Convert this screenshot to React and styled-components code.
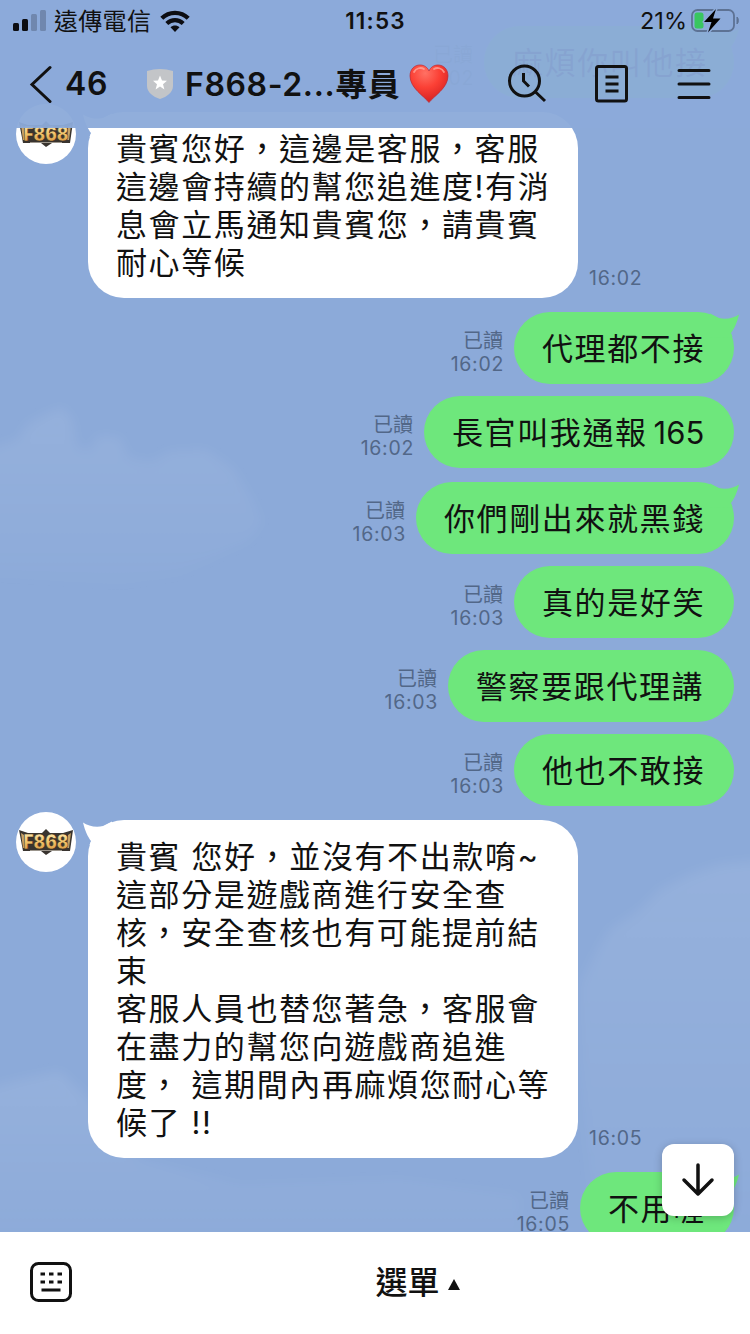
import React from "react";
import styled, { createGlobalStyle } from "styled-components";

const Global = createGlobalStyle`
  * { box-sizing: border-box; }
  body { margin: 0; background: #8caad9; }
`;

const FONT = `Inter, "Noto Sans CJK TC", sans-serif`;

const Screen = styled.div`
  position: relative;
  width: 750px;
  height: 1334px;
  overflow: hidden;
  display: flex;
  flex-direction: column;
  background: #8caad9;
  font-family: ${FONT};
  color: #111;
`;

const Sky = styled.svg`
  position: absolute;
  inset: 0;
`;

const Header = styled.header`
  position: absolute;
  top: 0;
  left: 0;
  width: 750px;
  height: 128px;
  display: flex;
  flex-direction: column;
  background: rgba(140, 170, 217, 0.955);
`;

const StatusBar = styled.div`
  display: grid;
  grid-template-columns: 1fr auto 1fr;
  align-items: center;
  height: 39px;
  padding: 0 11px 0 13px;
  font-size: 22px;
`;

const StatusGroup = styled.div`
  display: flex;
  align-items: center;
  justify-content: ${(p) => (p.$end ? "flex-end" : "flex-start")};
  gap: ${(p) => p.$gap}px;
`;

const Carrier = styled.span`
  font-size: 24px;
  line-height: 39px;
  padding-top: 2px;
  margin-left: -1px;
  letter-spacing: 0.3px;
`;

const Clock = styled.span`
  font-size: 22.5px;
  font-weight: 600;
  letter-spacing: 1.2px;
  margin-right: 1px;
`;

const Percent = styled.span`
  font-size: 23.5px;
  letter-spacing: 0;
`;

const NavBar = styled.nav`
  display: flex;
  align-items: center;
  height: 91px;
  padding: 0 39px 0 29px;
`;

const BackCount = styled.span`
  width: 81px;
  margin-left: 13px;
  font-size: 32px;
  font-weight: 600;
  letter-spacing: 0.6px;
`;

const Title = styled.h1`
  margin: 2px 0 0 11px;
  width: 224px;
  font-size: 32px;
  line-height: 44px;
  font-weight: 600;
  letter-spacing: 0.6px;
  white-space: nowrap;
`;

const NavActions = styled.div`
  display: flex;
  align-items: center;
  gap: 48px;
  margin-left: auto;
`;

const Chat = styled.main`
  position: relative;
  height: 1232px;
  overflow: hidden;
  display: flex;
  flex-direction: column;
  padding: 26px 16px 0;
`;

const Row = styled.div`
  display: flex;
  flex: none;
  align-items: flex-end;
  justify-content: ${(p) => (p.$mine ? "flex-end" : "flex-start")};
  margin-bottom: ${(p) => p.$after}px;
`;

const Avatar = styled.div`
  align-self: flex-start;
  width: 60px;
  height: 60px;
  margin: -8px 12px 0 0;
  border-radius: 50%;
  background: #fff;
  overflow: hidden;
`;

const Bubble = styled.div`
  position: relative;
  width: ${(p) => p.$width}px;
  padding: 18px 0 16px 28px;
  border-radius: 36px;
  background: ${(p) => (p.$mine ? "#6ee77c" : "#fff")};
`;

const Line = styled.div`
  position: relative;
  height: 38px;
  line-height: 38px;
  font-size: 31px;
  letter-spacing: 1.6px;
  white-space: pre;
`;

const Digits = styled.span`
  margin-left: 6px;
  letter-spacing: 0;
`;

const Tail = styled.svg`
  position: absolute;
  top: 0;
  ${(p) => (p.$mine ? "right: -6px; transform: scaleX(-1);" : "left: -6px;")}
`;

const Meta = styled.div`
  margin: ${(p) => (p.$mine ? "0 11px 9px 0" : "0 0 9px 11px")};
  color: #526788;
  font-size: 20px;
  line-height: 24px;
  text-align: right;
`;

const Time = styled.div`
  font-size: 19.5px;
  line-height: 22px;
  margin-right: -1px;
  letter-spacing: 0.7px;
`;

const ScrollButton = styled.button`
  position: absolute;
  left: 662px;
  top: 1144px;
  width: 72px;
  height: 72px;
  padding: 0;
  border: 0;
  border-radius: 12px;
  background: #fff;
  box-shadow: 0 2px 8px rgba(0, 0, 0, 0.22);
  display: flex;
  align-items: center;
  justify-content: center;
`;

const Footer = styled.footer`
  position: relative;
  height: 102px;
  background: #fff;
  display: grid;
  grid-template-columns: 1fr auto 1fr;
  align-items: center;
  padding: 0 30px 2px;
`;

const MenuLabel = styled.div`
  display: flex;
  align-items: center;
  gap: 8px;
  padding: 2px 0 0 85px;
  font-size: 32px;
  line-height: 40px;
  font-weight: 500;

  svg {
    margin-top: 3px;
  }
`;

const messages = [
  { mine: true, tail: true, width: 250, time: "16:02", lines: ["麻煩你叫他接"], after: 14 },
  {
    width: 490,
    time: "16:02",
    tail: true,
    after: 14,
    lines: ["貴賓您好，這邊是客服，客服", "這邊會持續的幫您追進度!有消", "息會立馬通知貴賓您，請貴賓", "耐心等候"],
  },
  { mine: true, tail: true, width: 220, time: "16:02", lines: ["代理都不接"], after: 12 },
  { mine: true, width: 310, time: "16:02", lines: ["長官叫我通報"], digits: "165", after: 14 },
  { mine: true, tail: true, width: 318, time: "16:03", lines: ["你們剛出來就黑錢"], after: 12 },
  { mine: true, width: 220, time: "16:03", lines: ["真的是好笑"], after: 12 },
  { mine: true, width: 286, time: "16:03", lines: ["警察要跟代理講"], after: 12 },
  { mine: true, width: 220, time: "16:03", lines: ["他也不敢接"], after: 14 },
  {
    width: 490,
    time: "16:05",
    tail: true,
    after: 14,
    lines: [
      "貴賓 您好，並沒有不出款唷~",
      "這部分是遊戲商進行安全查",
      "核，安全查核也有可能提前結",
      "束",
      "客服人員也替您著急，客服會",
      "在盡力的幫您向遊戲商追進",
      "度， 這期間內再麻煩您耐心等",
      "候了 !!",
    ],
  },
  { mine: true, tail: true, width: 154, time: "16:05", lines: ["不用喔"], after: 0 },
];

const Logo = () => (
  <svg width="60" height="60" viewBox="0 0 60 60">
    <defs>
      <linearGradient id="gold" x1="0" y1="0" x2="0" y2="1">
        <stop offset="0" stopColor="#fff3c4" />
        <stop offset="0.5" stopColor="#f3c56c" />
        <stop offset="1" stopColor="#cf8a35" />
      </linearGradient>
    </defs>
    <path d="M3 18L12 21H26L30 17L34 21H47L57 18L54 39L36 39L30 43L25 39L7 39Z" fill="#39342f" />
    <path d="M5 21L8 23L9 36H7ZM55 21L52 23L51 36H53Z" fill="#c9a468" />
    <text x="30" y="36.500" textAnchor="middle" textLength="45" lengthAdjust="spacingAndGlyphs" fontFamily="Inter, sans-serif" fontWeight="900" fontSize="19.500" fill="url(#gold)" stroke="#3a2a18" strokeWidth="0.5">F868</text>
    <path d="M14 38.500H46" stroke="#9b958c" strokeWidth="1.200" />
  </svg>
);

const Message = ({ mine, tail, width, time, lines, digits, after }) => {
  const bubble = (
    <Bubble $mine={mine} $width={width}>
      {tail && (
        <Tail $mine={mine} width="42" height="30" viewBox="0 0 42 30">
          <path d="M1 2.500C6 6 14 8 21 6L30 1.500L30 26L7.500 25L9 21C6 17 3 11 1 2.500Z" fill={mine ? "#6ee77c" : "#fff"} />
        </Tail>
      )}
      {lines.map((text) => (
        <Line key={text}>
          {text}
          {digits && <Digits>{digits}</Digits>}
        </Line>
      ))}
    </Bubble>
  );
  const meta = (
    <Meta $mine={mine}>
      {mine && <div>已讀</div>}
      <Time>{time}</Time>
    </Meta>
  );
  return (
    <Row $mine={mine} $after={after}>
      {mine ? meta : <Avatar><Logo /></Avatar>}
      {bubble}
      {!mine && meta}
    </Row>
  );
};

const Clouds = () => (
  <Sky width="750" height="1334" viewBox="0 0 750 1334">
    <defs>
      <filter id="soft" x="-20%" y="-20%" width="140%" height="140%"><feGaussianBlur stdDeviation="6" /></filter>
      <linearGradient id="haze" x1="0" y1="0" x2="0" y2="1">
        <stop offset="0" stopColor="#fff" stopOpacity="0.08" />
        <stop offset="1" stopColor="#fff" stopOpacity="0.01" />
      </linearGradient>
    </defs>
    <g filter="url(#soft)" fill="url(#haze)">
      <path d="M-20 452L18 440L28 424L48 414L62 408L72 420L76 448L92 450L98 436L120 438L128 458L152 462L170 452L205 450L232 468L252 500L262 522L250 540L180 575L120 585L-20 575Z" />
      <path d="M770 860L720 865L690 875L660 890L640 910L610 930L595 955L580 985L580 1060L590 1200L770 1240Z" />
      <path d="M-20 1090L20 1080L60 1072L90 1100L140 1160L240 1185L400 1180L520 1195L520 1240L-20 1240Z" />
    </g>
  </Sky>
);

const Heart = () => (
  <svg width="40" height="40" viewBox="0 0 40 40">
    <defs>
      <radialGradient id="heart" cx="0.4" cy="0.22" r="0.85">
        <stop offset="0" stopColor="#ff7164" />
        <stop offset="0.45" stopColor="#fb4035" />
        <stop offset="1" stopColor="#cf1c1e" />
      </radialGradient>
    </defs>
    <path d="M20 38.500C15 32 1 24 1 12C1 5 5.500 1 11 1C15.500 1 18.500 3.500 20 7C21.500 3.500 24.500 1 29 1C34.500 1 39 5 39 12C39 24 25 32 20 38.500Z" fill="url(#heart)" stroke="#b92b35" strokeWidth="0.700" />
    <path d="M5 8C7 4 12 3 15 5M25 5C28 3 33 4 35 8" stroke="#ffb0a5" strokeWidth="1.800" strokeLinecap="round" fill="none" opacity="0.700" />
  </svg>
);

export default function App() {
  return (
    <Screen>
      <Global />
      <Clouds />
      <Chat>
        {messages.map((m) => (
          <Message key={m.lines[0]} {...m} />
        ))}
      </Chat>
      <Footer>
        <svg width="42" height="40" viewBox="0 0 42 40" fill="none" stroke="#111">
          <rect x="1.500" y="1.500" width="39" height="37" rx="7" strokeWidth="3" />
          <path d="M10.500 12H15M19 12H23.500M27.500 12H32M10.500 20H15M19 20H23.500M27.500 20H32M11.500 28H30.500" strokeWidth="3" />
        </svg>
        <MenuLabel>
          選單
          <svg width="12" height="11" viewBox="0 0 12 11"><path d="M6 0L12 11H0Z" fill="#111" /></svg>
        </MenuLabel>
      </Footer>
      <Header>
        <StatusBar>
          <StatusGroup $gap={9}>
            <svg width="33" height="22" viewBox="0 0 33 22" fill="#0c0d12">
              <rect x="0" y="13" width="6" height="8" rx="1.500" />
              <rect x="9" y="9" width="6" height="12" rx="1.500" />
              <rect x="18" y="4" width="6" height="17" rx="1.500" opacity="0.220" />
              <rect x="27" y="0" width="6" height="21" rx="1.500" opacity="0.220" />
            </svg>
            <Carrier>遠傳電信</Carrier>
            <svg width="30" height="22" viewBox="0 0 30 22" fill="none" stroke="#0c0d12" strokeWidth="4.200">
              <path d="M1.800 8.300C9 1 21 1 28.200 8.300" />
              <path d="M6.800 13.500C11.500 9 18.500 9 23.200 13.500" />
              <path d="M10.500 17.300C13 15 17 15 19.500 17.300L15 22Z" fill="#0c0d12" stroke="none" />
            </svg>
          </StatusGroup>
          <Clock>11:53</Clock>
          <StatusGroup $end $gap={4}>
            <Percent>21%</Percent>
            <svg width="48" height="26" viewBox="0 0 48 26">
              <rect x="1" y="2" width="42" height="21" rx="5.500" fill="none" stroke="#5d7294" strokeWidth="1.800" />
              <path d="M46 9V16C47.800 15 47.800 10 46 9Z" fill="#5d7294" stroke="#5d7294" />
              <rect x="3.500" y="4.500" width="9" height="16" rx="2.500" fill="#39c660" />
              <path d="M25 1L13 14H20.500L17 24.500L29.500 10.500H22Z" fill="#000" stroke="#8caad9" strokeWidth="3" paintOrder="stroke" strokeLinejoin="round" />
            </svg>
          </StatusGroup>
        </StatusBar>
        <NavBar>
          <svg width="23" height="38" viewBox="0 0 23 38" fill="none" stroke="#111" strokeWidth="3" strokeLinecap="round">
            <path d="M21 2.500L3 19.500L21 36.500" />
          </svg>
          <BackCount>46</BackCount>
          <svg width="28" height="32" viewBox="0 0 28 32">
            <path d="M1 3Q14-1 27 3V18C27 24 21 29 14 31C7 29 1 24 1 18Z" fill="#c3c5c8" />
            <path d="M14 7.500L16 12.500L21 12.800L17 16.200L18.400 21.500L14 18.500L9.600 21.500L11 16.200L7 12.800L12 12.500Z" fill="#fff" />
          </svg>
          <Title>F868-2...專員</Title>
          <Heart />
          <NavActions>
            <svg width="40" height="40" viewBox="0 0 40 40" fill="none" stroke="#111" strokeWidth="3">
              <circle cx="17.500" cy="17" r="15" />
              <path d="M28 27.500L38 37M16.500 9V17L22 22.500" />
            </svg>
            <svg width="34" height="38" viewBox="0 0 34 38" fill="none" stroke="#111" strokeWidth="3">
              <rect x="1.500" y="1.500" width="30" height="34.500" rx="2" />
              <path d="M10.500 12H23.500M10.500 19H23.500M10.500 26H23.500" />
            </svg>
            <svg width="34" height="32" viewBox="0 0 34 32" fill="none" stroke="#111" strokeWidth="3" strokeLinecap="round">
              <path d="M2 2.500H32M2 16H32M2 29.500H32" />
            </svg>
          </NavActions>
        </NavBar>
      </Header>
      <ScrollButton>
        <svg width="34" height="34" viewBox="0 0 34 34" fill="none" stroke="#111" strokeWidth="3.500" strokeLinecap="round" strokeLinejoin="round">
          <path d="M17 2V31M3 17L17 31L31 17" />
        </svg>
      </ScrollButton>
    </Screen>
  );
}
